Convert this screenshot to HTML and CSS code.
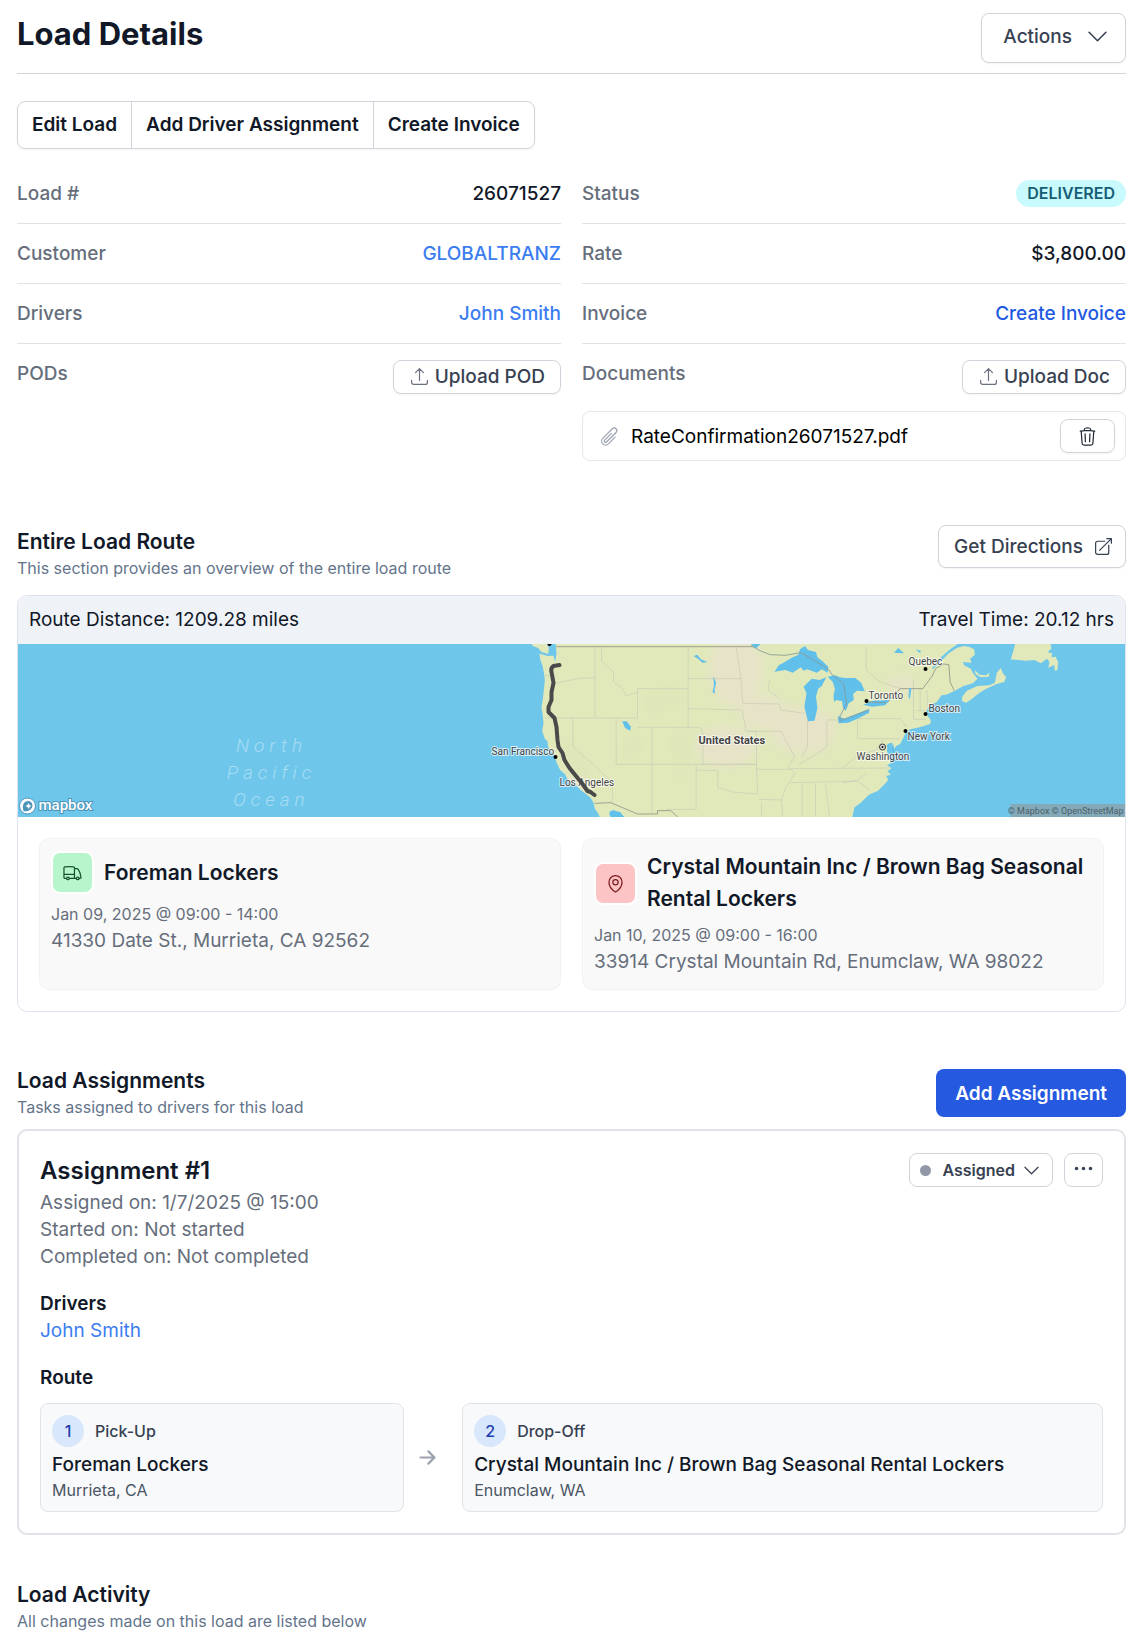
FILE: index.html
```html
<!DOCTYPE html>
<html lang="en">
<head>
<meta charset="utf-8">
<meta name="viewport" content="width=device-width, initial-scale=1">
<title>Load Details</title>
<link rel="stylesheet" href="styles.css">
</head>
<body>
<svg class="sprite" aria-hidden="true">
  <symbol id="chevron" viewBox="0 0 24 24"><path d="m19.5 8.25-7.5 7.5-7.5-7.5"/></symbol>
  <symbol id="upload" viewBox="0 0 24 24"><path d="M3 16.5v2.25A2.25 2.25 0 0 0 5.25 21h13.5A2.25 2.25 0 0 0 21 18.75V16.5m-13.5-9L12 3m0 0 4.5 4.5M12 3v13.5"/></symbol>
</svg>
<main class="page">
  <header class="page-header">
    <h1 class="page-title">Load Details</h1>
    <button class="btn btn-actions" type="button">Actions
      <svg class="icon icon-lg"><use href="#chevron"/></svg>
    </button>
  </header>

  <div class="btn-group">
    <button type="button">Edit Load</button>
    <button type="button">Add Driver Assignment</button>
    <button type="button">Create Invoice</button>
  </div>

  <div class="details">
    <dl class="detail-list">
      <div class="detail-row"><dt>Load #</dt><dd>26071527</dd></div>
      <div class="detail-row"><dt>Customer</dt><dd><a class="link" href="#">GLOBALTRANZ</a></dd></div>
      <div class="detail-row"><dt>Drivers</dt><dd><a class="link" href="#">John Smith</a></dd></div>
      <div class="detail-row"><dt>PODs</dt><dd>
        <button class="btn btn-upload" type="button"><svg class="icon"><use href="#upload"/></svg>Upload POD</button>
      </dd></div>
    </dl>
    <div>
      <dl class="detail-list">
        <div class="detail-row"><dt>Status</dt><dd><span class="badge">DELIVERED</span></dd></div>
        <div class="detail-row"><dt>Rate</dt><dd>$3,800.00</dd></div>
        <div class="detail-row"><dt>Invoice</dt><dd><a class="link link-strong" href="#">Create Invoice</a></dd></div>
        <div class="detail-row"><dt>Documents</dt><dd>
          <button class="btn btn-upload" type="button"><svg class="icon"><use href="#upload"/></svg>Upload Doc</button>
        </dd></div>
      </dl>
      <div class="file">
        <svg class="icon icon-muted" viewBox="0 0 24 24"><path d="m18.375 12.739-7.693 7.693a4.5 4.5 0 0 1-6.364-6.364l10.94-10.94A3 3 0 1 1 19.5 7.372L8.552 18.32m.009-.01-.01.01m5.699-9.941-7.81 7.81a1.5 1.5 0 0 0 2.112 2.13"/></svg>
        <span class="file-name">RateConfirmation26071527.pdf</span>
        <button class="btn btn-delete" type="button" aria-label="Delete document">
          <svg class="icon" viewBox="0 0 24 24"><path d="m14.74 9-.346 9m-4.788 0L9.26 9m9.968-3.21c.342.052.682.107 1.022.166m-1.022-.165L18.16 19.673a2.25 2.25 0 0 1-2.244 2.077H8.084a2.25 2.25 0 0 1-2.244-2.077L4.772 5.79m14.456 0a48.108 48.108 0 0 0-3.478-.397m-12 .562c.34-.059.68-.114 1.022-.165m0 0a48.11 48.11 0 0 1 3.478-.397m7.5 0v-.916c0-1.18-.91-2.164-2.09-2.201a51.964 51.964 0 0 0-3.32 0c-1.18.037-2.09 1.022-2.09 2.201v.916m7.5 0a48.667 48.667 0 0 0-7.5 0"/></svg>
        </button>
      </div>
    </div>
  </div>

  <section class="route">
    <div class="section-header">
      <div class="section-heading">
        <h2 class="section-title">Entire Load Route</h2>
        <p class="section-sub">This section provides an overview of the entire load route</p>
      </div>
      <button class="btn btn-directions" type="button">Get Directions
        <svg class="icon" viewBox="0 0 24 24"><path d="M13.5 6H5.25A2.25 2.25 0 0 0 3 8.25v10.5A2.25 2.25 0 0 0 5.25 21h10.5A2.25 2.25 0 0 0 18 18.75V10.5m-10.5 6L21 3m0 0h-5.25M21 3v5.25"/></svg>
      </button>
    </div>
    <div class="route-card">
      <div class="route-stats"><span>Route Distance: 1209.28 miles</span><span>Travel Time: 20.12 hrs</span></div>
      <svg class="map" viewBox="0 0 1108 173" preserveAspectRatio="xMidYMid slice" role="img" aria-label="Map of the load route">
        <defs>
          <filter id="soft" x="-20%" y="-20%" width="140%" height="140%"><feGaussianBlur stdDeviation="16"/></filter>
          <clipPath id="land-clip"><use href="#land"/></clipPath>
        </defs>
        <rect width="1108" height="173" fill="#6ec7ea"/>
        <g transform="translate(462 -4) scale(.33333)">
          <path id="land" fill="#e1e9bb" d="M228 8 231 40 227 66 222 47 204 48 180 41 182 58 190 80 193 98 196 120 193 150 190 178 186 202 190 228 192 250 188 272 196 296 204 304 206 322 220 340 226 352 232 370 242 390 256 402 268 424 290 436 304 450 322 464 334 474 342 488 346 506 356 520 362 534 396 534 390 514 404 510 418 518 432 534 1118 534 1125 502 1144 488 1168 464 1196 452 1218 430 1226 420 1220 408 1234 404 1224 394 1236 384 1222 376 1234 370 1226 348 1222 330 1228 310 1238 308 1242 330 1250 318 1262 312 1270 296 1280 276 1292 268 1320 262 1352 252 1354 240 1344 228 1342 210 1352 196 1372 186 1386 166 1400 164 1426 152 1452 138 1480 130 1494 116 1482 102 1474 86 1454 76 1450 66 1476 68 1472 56 1486 44 1484 28 1468 20 1452 18 1432 24 1408 40 1382 66 1360 88 1358 84 1386 50 1412 28 1440 8Z"/>
          <path fill="#e1e9bb" d="M154 8 160 18 176 24 186 36 206 42 208 24 200 8ZM1448 170 1462 152 1494 138 1530 136 1546 128 1552 98 1564 84 1570 100 1580 112 1574 126 1552 132 1520 146 1498 160 1476 178 1460 188 1448 184ZM1486 90 1500 104 1520 106 1530 98 1528 110 1504 112 1488 102ZM1608 8 1600 38 1594 58 1640 62 1664 60 1684 70 1702 56 1710 66 1706 84 1724 74 1726 92 1734 90 1736 66 1728 50 1716 52 1718 40 1704 36 1716 26 1712 8Z"/>
          <g clip-path="url(#land-clip)">
            <g fill="#eae0d0" opacity=".65" filter="url(#soft)"><ellipse cx="770" cy="90" rx="80" ry="110"/><ellipse cx="740" cy="320" rx="90" ry="60"/><ellipse cx="850" cy="215" rx="70" ry="50"/><ellipse cx="970" cy="270" rx="100" ry="70"/><ellipse cx="1265" cy="135" rx="40" ry="25"/><ellipse cx="260" cy="440" rx="60" ry="30"/></g>
            <g fill="none" stroke="#c3ca9e" stroke-width="9" opacity=".35" filter="url(#soft)"><path d="M250 310 320 400M470 300 450 340M520 160 530 220M600 280 604 400M560 150 600 190"/></g>
          </g>
          <g fill="none" stroke="#c8ccb6" stroke-width="2">
            <path d="M346 20V234M196 108 225 106 226 130 300 115 346 113M366 20V62L402 96V126L425 140 440 168 474 156M196 234H474V146H626M626 20V262M626 116H784M410 234V373M280 234V318L396 424 400 470 394 490M474 262H662L670 280V373H831V274H800L788 210 626 206M517 264V520M410 373H831L834 460M650 373V508H560M650 390 715 392V442L760 456 836 462M770 20 784 116 790 190 900 192 904 210 976 220M870 120 866 150 900 176M808 274H905L918 300 946 350 926 380 946 400 920 440 906 480 910 530M831 388H932M838 478 906 480M846 530V490M968 430V530M984 240V320L968 350M1042 244V320L1006 346 960 372M1042 240H1082M930 428 1130 424 1160 400M930 386 1230 384M1008 430V530M1038 430 1050 530M1090 428 1130 420 1170 450M1134 238V296H1260M1134 236H1262L1280 260M1090 384 1130 350 1190 330 1210 300M1302 120V238H1340M1322 146V212M1310 212H1342M1160 20V90L1200 124 1262 146M1342 150 1346 205"/>
          </g>
          <path fill="none" stroke="#8f9486" stroke-width="2.5" d="M230 20H822M345 490 394 488 474 522H534V512H574L598 534M1168 186H1225L1262 146H1330L1358 108 1368 86 1392 72 1408 74 1412 126 1424 152"/>
        </g>
        <g transform="matrix(.3642 0 0 .3333 553 -144)">
          <g fill="#61c0ea">
            <path d="M560 515 572 496 592 484 610 472 626 464 630 448 644 438 652 450 674 456 678 472 692 484 708 500 706 518 690 508 676 518 650 508 640 512 632 502 610 518 590 510ZM662 536 684 540 702 532 690 558 680 566 674 590 678 624 670 662 652 664 642 620 648 580 640 560ZM706 530 726 526 740 532 754 534 782 534 798 548 808 574 786 572 776 582 778 600 764 610 756 632 748 624 746 604 730 600 724 606 722 588 726 566 720 546ZM734 648 752 656 780 644 820 626 820 638 788 656 762 668 736 670ZM804 614 830 602 876 600 864 616 828 620ZM930 564 936 564 932 598 928 590ZM494 430H524L508 446ZM338 468 348 464 358 478 376 486 362 488 350 476ZM392 528 400 548 396 566 396 582 390 576 394 556ZM142 664 154 664 166 680 164 692 150 684ZM106 940 116 932 136 936 148 952H110ZM888 458 900 444 916 460ZM948 448 962 452 960 460ZM886 732 892 760 884 770 880 750ZM868 734 876 732 874 758Z"/>
          </g>
          <path fill="none" stroke="#8a9a98" stroke-width="2.5" d="M496 436 520 452 548 464 590 466 632 458 668 480 710 510 718 524 750 552 758 612 740 648 740 662 820 630M812 606 866 608"/>
        </g>
        <g class="map-ocean"><text x="254" y="108" text-anchor="middle">North</text><text x="254" y="135" text-anchor="middle">Pacific</text><text x="254" y="162" text-anchor="middle">Ocean</text></g>
        <g>
          <circle cx="538" cy="113" r="2"/><circle cx="532" cy="0" r="2"/><circle cx="908" cy="25" r="2"/><circle cx="849" cy="57" r="2"/><circle cx="908" cy="70" r="2"/><circle cx="888" cy="87" r="2"/>
          <circle cx="865" cy="103" r="3" fill="#ddd" stroke="#333"/><circle cx="865" cy="103" r="1"/>
        </g>
        <g class="map-label">
          <text x="474" y="111">San Francisco</text><text x="542" y="142">Los Angeles</text><text x="891" y="21">Quebec</text><text x="851" y="55">Toronto</text><text x="911" y="68">Boston</text><text x="890" y="96">New York</text><text x="839" y="116">Washington</text>
          <text class="map-country" x="681" y="100">United States</text>
        </g>
        <path fill="none" stroke="#4a4a4a" stroke-width="4" stroke-linecap="round" stroke-linejoin="round" d="M542 21 536 22Q533 24 534 28L536 39 534 48V56L531 63V68L537 74 539 83 540 96 541 103 545 109 547 116 552 124 565 140 570 147 573 148 577 151"/>
        <g>
          <circle cx="10" cy="162" r="8" fill="#fff" stroke="#4c94b8"/>
          <path fill="#4c94b8" d="M6 167C4 160 7 157 11 157a4.5 4.5 0 0 1 4 5C14 166 10 168 6 167Z"/>
          <path fill="#fff" d="m11 159 1 2 2 1-2 1-1 2-1-2-2-1 2-1Z"/>
          <text class="map-brand" x="21" y="166">mapbox</text>
        </g>
        <rect x="993" y="160" width="115" height="13" fill="#84aaba"/>
        <text class="map-credit" x="1106" y="170" text-anchor="end">© Mapbox © OpenStreetMap</text>
      </svg>
      <div class="stops">
        <article class="stop">
          <div class="stop-head">
            <span class="stop-icon pickup"><svg class="icon" viewBox="0 0 24 24"><path d="M8.25 18.75a1.5 1.5 0 0 1-3 0m3 0a1.5 1.5 0 0 0-3 0m3 0h6m-9 0H3.375a1.125 1.125 0 0 1-1.125-1.125V14.25m17.25 4.5a1.5 1.5 0 0 1-3 0m3 0a1.5 1.5 0 0 0-3 0m3 0h1.125c.621 0 1.129-.504 1.09-1.124a17.902 17.902 0 0 0-3.213-9.193 2.056 2.056 0 0 0-1.58-.86H14.25M16.5 18.75h-2.25m0-11.177v-.958c0-.568-.422-1.048-.987-1.106a48.554 48.554 0 0 0-10.026 0 1.106 1.106 0 0 0-.987 1.106v7.635m12-6.677v6.677m0 4.5v-4.5m0 0h-12"/></svg></span>
            <h3 class="stop-name">Foreman Lockers</h3>
          </div>
          <p class="stop-date">Jan 09, 2025 @ 09:00 - 14:00</p>
          <p class="stop-address">41330 Date St., Murrieta, CA 92562</p>
        </article>
        <article class="stop">
          <div class="stop-head">
            <span class="stop-icon dropoff"><svg class="icon" viewBox="0 0 24 24"><path d="M15 10.5a3 3 0 1 1-6 0 3 3 0 0 1 6 0Z"/><path d="M19.5 10.5c0 7.142-7.5 11.25-7.5 11.25S4.5 17.642 4.5 10.5a7.5 7.5 0 1 1 15 0Z"/></svg></span>
            <h3 class="stop-name">Crystal Mountain Inc / Brown Bag Seasonal Rental Lockers</h3>
          </div>
          <p class="stop-date">Jan 10, 2025 @ 09:00 - 16:00</p>
          <p class="stop-address">33914 Crystal Mountain Rd, Enumclaw, WA 98022</p>
        </article>
      </div>
    </div>
  </section>

  <section class="assignments">
    <div class="section-header centered">
      <div>
        <h2 class="section-title">Load Assignments</h2>
        <p class="section-sub">Tasks assigned to drivers for this load</p>
      </div>
      <button class="btn-primary" type="button">Add Assignment</button>
    </div>
    <article class="assignment">
      <div class="assignment-head">
        <div>
          <h3 class="assignment-title">Assignment #1</h3>
          <p>Assigned on: 1/7/2025 @ 15:00</p>
          <p>Started on: Not started</p>
          <p>Completed on: Not completed</p>
        </div>
        <div class="assignment-tools">
          <button class="btn btn-status" type="button"><span class="dot"></span>Assigned<svg class="icon"><use href="#chevron"/></svg></button>
          <button class="btn btn-more" type="button" aria-label="More options">
            <svg class="icon icon-dots" viewBox="0 0 24 24"><circle cx="4" cy="12" r="2"/><circle cx="12" cy="12" r="2"/><circle cx="20" cy="12" r="2"/></svg>
          </button>
        </div>
      </div>
      <div class="assignment-block">
        <h4>Drivers</h4>
        <a class="link" href="#">John Smith</a>
      </div>
      <div class="assignment-block">
        <h4>Route</h4>
        <div class="legs">
          <div class="leg">
            <div class="leg-type"><span class="leg-number">1</span>Pick-Up</div>
            <p class="leg-name">Foreman Lockers</p>
            <p class="leg-city">Murrieta, CA</p>
          </div>
          <svg class="icon leg-arrow" viewBox="0 0 24 24"><path d="M4 12h15M13 5l7 7-7 7"/></svg>
          <div class="leg">
            <div class="leg-type"><span class="leg-number">2</span>Drop-Off</div>
            <p class="leg-name">Crystal Mountain Inc / Brown Bag Seasonal Rental Lockers</p>
            <p class="leg-city">Enumclaw, WA</p>
          </div>
        </div>
      </div>
    </article>
  </section>

  <section class="activity">
    <h2 class="section-title">Load Activity</h2>
    <p class="section-sub">All changes made on this load are listed below</p>
  </section>
</main>
</body>
</html>
```
FILE: styles.css
```css
* { box-sizing: border-box; }

body {
  margin: 0;
  background: #fff;
  color: #111827;
  font: 400 19px/27px Inter, "Liberation Sans", sans-serif;
}

h1, h2, h3, h4, p, dl, dd { margin: 0; }
button { font: inherit; color: inherit; cursor: pointer; }
.sprite { position: absolute; width: 0; height: 0; }

.page { padding: 13px 16px 12px 17px; }

.icon {
  flex: none;
  width: 21px;
  height: 21px;
  fill: none;
  stroke: currentColor;
  stroke-width: 1.4;
  stroke-linecap: round;
  stroke-linejoin: round;
}
.icon-lg { width: 27px; height: 27px; }
.icon-muted { color: #9ca3af; }
.icon-dots { fill: currentColor; stroke: none; }

.link { color: #3b7df0; text-decoration: none; }
.link-strong { color: #2159e0; }

/* Buttons */
.btn {
  display: inline-flex;
  align-items: center;
  border: 1px solid #d1d5db;
  border-radius: 8px;
  background: #fff;
  color: #374151;
  font-weight: 500;
  white-space: nowrap;
  box-shadow: 0 1px 2px rgb(0 0 0 / 5%);
}
.btn-actions { height: 50px; padding: 0 14px 3px 21px; gap: 12px; }
.btn-upload { height: 34px; padding: 0 15px 1px; gap: 5px; }
.btn-upload .icon { color: #6b7280; }
.btn-delete { height: 34px; padding: 0 16px; color: #1f2937; }
.btn-directions { height: 43px; padding: 0 11px 0 15px; gap: 10px; }
.btn-status { height: 34px; padding: 0 10px; font-size: 16px; font-weight: 600; box-shadow: none; }
.btn-status .icon { margin-left: 6px; }
.btn-more { height: 34px; padding: 0 8px 4px; box-shadow: none; }
.btn-primary {
  height: 48px;
  padding: 0 19px;
  border: 0;
  border-radius: 8px;
  background: #2459e0;
  color: #fff;
  font-weight: 600;
}

.btn-group {
  display: inline-flex;
  height: 48px;
  margin-top: 27px;
  border: 1px solid #d1d5db;
  border-radius: 8px;
  box-shadow: 0 1px 2px rgb(0 0 0 / 5%);
}
.btn-group button {
  padding: 0 14px 2px;
  border: 0;
  background: none;
  font-weight: 600;
}
.btn-group button + button { border-left: 1px solid #d1d5db; }

/* Page header */
.page-header {
  display: flex;
  justify-content: space-between;
  align-items: flex-start;
  padding-bottom: 10px;
  border-bottom: 1px solid #d1d5db;
}
.page-title { font-size: 31px; line-height: 42px; font-weight: 700; }

/* Details */
.details {
  display: grid;
  grid-template-columns: 1fr 1fr;
  column-gap: 21px;
  margin-top: 15px;
}
.detail-row {
  display: flex;
  justify-content: space-between;
  padding: 16px 0;
  border-bottom: 1px solid #e1e3e8;
  font-weight: 500;
}
.detail-row:last-child { padding-bottom: 17px; border-bottom: 0; }
.detail-row dt { color: #666e7c; }
.detail-row dd { display: flex; }
.badge {
  padding: 0 11px;
  border-radius: 14px;
  background: #c8fafe;
  color: #155e75;
  font-size: 16px;
  font-weight: 600;
}
.file {
  display: flex;
  align-items: center;
  height: 50px;
  padding: 0 10px 0 16px;
  border: 1px solid #e5e7eb;
  border-radius: 8px;
}
.file-name { flex: 1; margin-left: 11px; color: #000; }

/* Sections */
.section-header { display: flex; justify-content: space-between; align-items: flex-start; }
.section-header.centered { align-items: center; }
.section-heading { padding-top: 3px; }
.section-title { font-size: 21px; line-height: 28px; font-weight: 600; }
.section-sub { color: #64748b; font-size: 16px; line-height: 24px; }

.route { margin-top: 64px; }
.route-card {
  margin-top: 15px;
  overflow: hidden;
  border: 1px solid #dde3ec;
  border-radius: 10px;
}
.route-stats {
  display: flex;
  justify-content: space-between;
  padding: 10px 11px 11px;
  background: #eff2f7;
}

/* Map */
.map { display: block; width: 100%; height: 173px; font-family: Roboto, sans-serif; }
.map-ocean { fill: #a9dcf5; font-size: 19px; font-style: italic; font-weight: 300; letter-spacing: 5px; }
.map-label { fill: #444; stroke: #fff; stroke-opacity: .7; stroke-width: 2px; paint-order: stroke; font-size: 10px; }
.map-country { font-size: 11px; font-weight: 700; }
.map-brand { fill: #fff; stroke: #4c94b8; stroke-width: 2px; paint-order: stroke; font-size: 15px; font-weight: 500; }
.map-credit { fill: #4b5f68; font-size: 9px; }

/* Stops */
.stops { display: grid; grid-template-columns: 1fr 1fr; gap: 21px; padding: 21px; }
.stop {
  padding: 12px 11px 14px;
  border: 1px solid #f0f2f6;
  border-radius: 10px;
  background: #f9f9f9;
}
.stop-head { display: flex; align-items: center; gap: 10px; margin-bottom: 8px; }
.stop-icon {
  display: flex;
  padding: 9px;
  border: 2px solid #fff;
  border-radius: 9px;
}
.pickup { background: #b7f6cd; color: #14532d; }
.dropoff { background: #fdc4c6; color: #7f1d1d; }
.stop-name { font-size: 21px; line-height: 32px; font-weight: 600; }
.stop-date { color: #666e7c; font-size: 16px; line-height: 25px; }
.stop-address { color: #666e7c; }

/* Assignments */
.assignments { margin-top: 55px; }
.assignment {
  margin-top: 10px;
  padding: 22px 21px 21px;
  border: 2px solid #e1e3e8;
  border-radius: 10px;
}
.assignment-head { display: flex; justify-content: space-between; align-items: flex-start; color: #666e7c; }
.assignment-title { color: #111827; font-size: 24px; line-height: 36px; font-weight: 600; }
.assignment-tools { display: flex; gap: 11px; }
.dot { width: 11px; height: 11px; margin-right: 11px; border-radius: 50%; background: #9299a6; }
.assignment-block { margin-top: 20px; }
.assignment-block h4 { font-size: 19px; font-weight: 600; }
.legs {
  display: grid;
  grid-template-columns: 25fr auto 44fr;
  align-items: center;
  margin-top: 12px;
}
.leg {
  padding: 11px 11px 9px;
  border: 1px solid #e1e3e8;
  border-radius: 8px;
  background: #f8f9fb;
}
.leg-type { display: flex; align-items: center; gap: 11px; margin-bottom: 4px; color: #374151; font-size: 16px; font-weight: 500; }
.leg-number {
  width: 32px;
  border-radius: 50%;
  background: #d8e7fc;
  color: #1e40af;
  line-height: 32px;
  text-align: center;
}
.leg-name { font-weight: 500; }
.leg-city { color: #4b5563; font-size: 16px; line-height: 24px; }
.leg-arrow { margin: 0 24px 0 13px; color: #9ca3af; stroke-width: 2.5; }

.activity { margin-top: 46px; }
```
